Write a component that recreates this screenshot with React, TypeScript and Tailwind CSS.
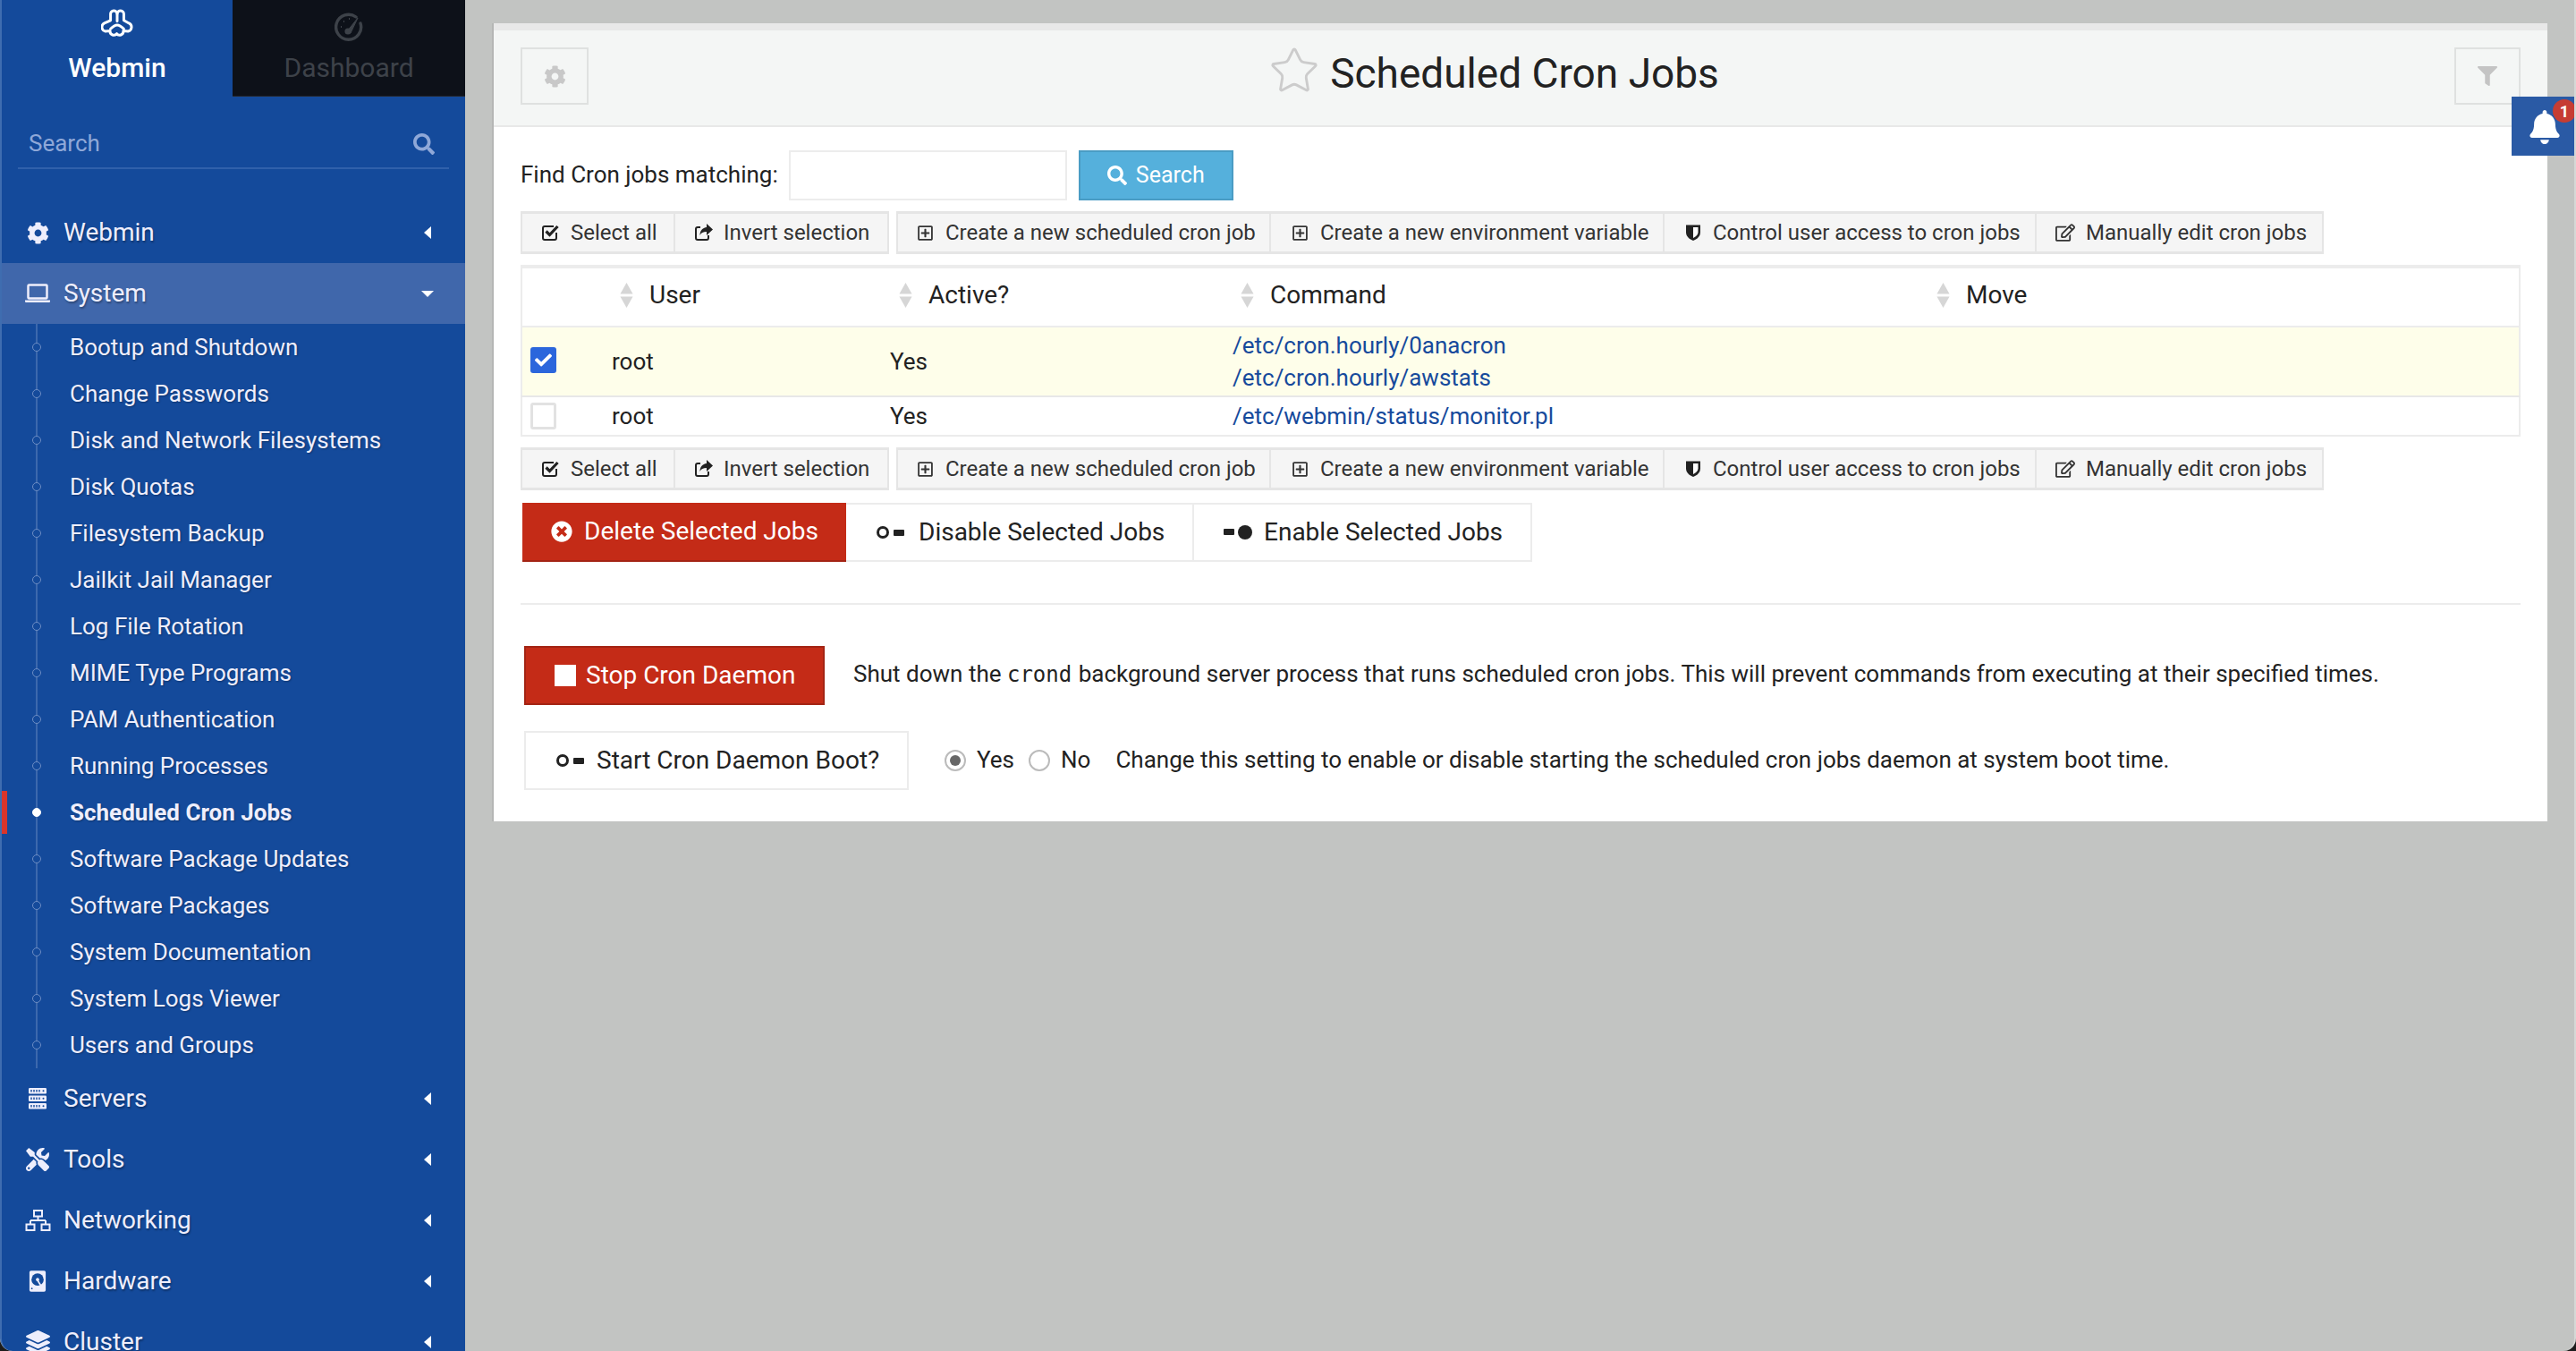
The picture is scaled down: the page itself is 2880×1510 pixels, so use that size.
import React from "react";
import {
  FaCog,
  FaTools,
  FaLayerGroup,
  FaSearch,
  FaFilter,
  FaBell,
  FaRegPlusSquare,
  FaRegEdit,
  FaTimesCircle,
  FaCheck,
} from "react-icons/fa";
import { LuStar } from "react-icons/lu";

const subItems = [
  "Bootup and Shutdown",
  "Change Passwords",
  "Disk and Network Filesystems",
  "Disk Quotas",
  "Filesystem Backup",
  "Jailkit Jail Manager",
  "Log File Rotation",
  "MIME Type Programs",
  "PAM Authentication",
  "Running Processes",
  "Scheduled Cron Jobs",
  "Software Package Updates",
  "Software Packages",
  "System Documentation",
  "System Logs Viewer",
  "Users and Groups",
];

const WebminLogo = () => (
  <svg width="36" height="33" viewBox="0 0 34 31" fill="none" stroke="white" strokeWidth="2.800" strokeLinejoin="round" strokeLinecap="round">
    <path d="M10 12V5.500a3.500 3.500 0 0 1 7-.5a3.500 3.500 0 0 1 7 .5V12l5.500 3a4.500 4.500 0 0 1-1 8.500l-5-.5c.5 4.500-5 6-7 3c-2 3-7.500 1.500-7-3l-5 .5a4.500 4.500 0 0 1-1-8.500z" />
    <path d="M17 5v8M10 21c3-3 5-4 7-4s4 1 7 4" />
  </svg>
);

const Gauge = () => (
  <svg width="32" height="32" viewBox="0 0 32 32" fill="none" stroke="#3d4249">
    <path d="M24 5A14 14 0 1 0 29 12" strokeWidth="3.400" strokeLinecap="round" />
    <path d="M14 21L26 6l-8 17z" fill="#3d4249" strokeWidth="1" />
    <circle cx="15" cy="21" r="3.600" fill="#3d4249" strokeWidth="0" />
    <path d="M7 16h1M10 10h1M16 7h1" strokeWidth="2" />
  </svg>
);

const LaptopIcon = () => (
  <svg width="28" height="22" viewBox="0 0 28 22">
    <rect x="3.500" y="1.500" width="21" height="15" rx="1" fill="none" stroke="#eeeefc" strokeWidth="2.500" />
    <path d="M0 18.500h28v1.500a1 1 0 0 1-1 1H1a1 1 0 0 1-1-1z" fill="#eeeefc" />
  </svg>
);

const ServerIcon = () => (
  <svg width="20" height="24" viewBox="0 0 20 24" fill="#eeeefc">
    {[0, 8.5, 17].map((y) => (
      <g key={y}>
        <rect x="0" y={y} width="20" height="6.500" rx="1.200" />
        <path d={`M3 ${y + 2}v2.500M6 ${y + 2}v2.500M9 ${y + 2}v2.500M12 ${y + 2}v2.500`} stroke="#144a9b" strokeWidth="1.400" />
        <circle cx="16.500" cy={y + 3.2} r="1" fill="#144a9b" />
      </g>
    ))}
  </svg>
);

const SitemapIcon = () => (
  <svg width="29" height="24" viewBox="0 0 29 24" fill="none" stroke="#eeeefc">
    <rect x="10" y="1" width="9" height="6.500" strokeWidth="2" />
    <rect x="1.500" y="16.500" width="9" height="6.500" strokeWidth="2" />
    <rect x="18.500" y="16.500" width="9" height="6.500" strokeWidth="2" />
    <path d="M14.500 7.500v4.500M6 12h17M6 12v4M23 12v4" strokeWidth="2" />
  </svg>
);

const DiskIcon = () => (
  <svg width="20" height="26" viewBox="0 0 22 26">
    <rect x="1" y="0" width="20" height="26" rx="2" fill="#eeeefc" />
    <circle cx="11" cy="11" r="7.500" fill="#144a9b" />
    <circle cx="11" cy="11" r="2" fill="#eeeefc" />
    <path d="M11 12l5 8" stroke="#eeeefc" strokeWidth="2" />
    <circle cx="4" cy="22" r="1" fill="#144a9b" />
  </svg>
);

const SortIcon = () => (
  <svg width="15" height="28" viewBox="0 0 15 28" className="shrink-0" fill="#d6d6d6">
    <path d="M7.500 0l7 12.500H.5z" />
    <path d="M7.500 28l7-12.500H.5z" />
  </svg>
);

const ToggleOff = () => (
  <svg width="32" height="14" viewBox="0 0 32 14" className="shrink-0">
    <circle cx="8" cy="7" r="5.500" fill="none" stroke="#222" strokeWidth="3" />
    <rect x="20" y="4" width="12" height="7" rx="1" fill="#222" />
  </svg>
);

const ToggleOn = () => (
  <svg width="32" height="16" viewBox="0 0 32 16" className="shrink-0">
    <circle cx="24" cy="8" r="8" fill="#222" />
    <rect x="0" y="4" width="12" height="7" rx="1" fill="#222" />
  </svg>
);

const ShieldIcon = () => (
  <svg width="18" height="20" viewBox="0 0 18 20" className="shrink-0">
    <path d="M1 1.500h16v8c0 5-4 8-8 9.500c-4-1.500-8-4.500-8-9.500z" fill="#222" />
    <path d="M9 4h5.500v5.500c0 3-2.500 5-5.500 6.500z" fill="#fff" />
  </svg>
);

const CheckSquareIcon = () => (
  <svg width="22" height="20" viewBox="0 0 22 20" className="shrink-0" fill="none" stroke="#222">
    <path d="M17 10v6a2 2 0 0 1-2 2H4a2 2 0 0 1-2-2V5a2 2 0 0 1 2-2h10" strokeWidth="2" />
    <path d="M5.500 8.500l4 4l9-9.500" strokeWidth="3.200" />
  </svg>
);

const ShareSquareIcon = () => (
  <svg width="22" height="20" viewBox="0 0 22 20" className="shrink-0">
    <path d="M16 13v3a2 2 0 0 1-2 2H4a2 2 0 0 1-2-2V6a2 2 0 0 1 2-2h3" fill="none" stroke="#222" strokeWidth="2" />
    <path d="M14 0l7 6.500l-7 6.500V9c-4 0-6 1-7.500 4c0-5 3-8.500 7.500-9z" fill="#222" />
  </svg>
);

const MainRow = ({ icon, label, open }: { icon: React.ReactNode; label: string; open?: boolean }) => (
  <div className={`flex items-center h-[68px] pl-[25px] pr-[38px] ${open ? "bg-[#4067ab]" : ""}`}>
    <div className="w-[30px] flex justify-center text-[#eeeefc]">{icon}</div>
    <span className="ml-[14px] flex-1 text-[28px] text-[#eeeefc] [text-shadow:1px_2px_2px_rgba(0,0,0,0.3)]">{label}</span>
    {open ? (
      <div className="w-0 h-0 border-x-[7px] border-x-transparent border-t-[7px] border-t-white mr-[-3px]" />
    ) : (
      <div className="w-0 h-0 border-y-[7px] border-y-transparent border-r-[8px] border-r-white" />
    )}
  </div>
);

const Sidebar = () => (
  <div className="w-[520px] h-full shrink-0 bg-[#144a9b] border-l-2 border-[#3f6db0] rounded-bl-[14px] overflow-hidden">
    <div className="flex h-[108px]">
      <div className="w-[258px] flex flex-col items-center pt-[10px]">
        <WebminLogo />
        <span className="mt-[15px] text-[30px] leading-[36px] font-medium text-white">Webmin</span>
      </div>
      <div className="w-[260px] flex flex-col items-center pt-[14px] bg-[#0d1119] border-b border-[#25272c]">
        <Gauge />
        <span className="mt-[12px] text-[30px] leading-[36px] text-[#3d4249]">Dashboard</span>
      </div>
    </div>
    <div className="mx-[18px] h-[81px] flex items-center justify-between pt-[26px] pl-[12px] pr-[16px] border-b-2 border-[#3060ab]">
      <span className="text-[26px] text-[#8fa8d8]">Search</span>
      <FaSearch className="text-[#8fa8d8] text-[24px]" />
    </div>
    <div className="mt-[37px]">
      <MainRow icon={<FaCog size={25} />} label="Webmin" />
      <MainRow icon={<LaptopIcon />} label="System" open />
      <div className="relative ml-[38px] border-l-2 border-[#3d69ad]">
        {subItems.map((item) => (
          <div key={item} className="h-[52px] flex items-center pl-[36px]">
            <div
              className={`absolute left-[-6px] w-[10px] h-[10px] rounded-full border ${
                item === "Scheduled Cron Jobs" ? "bg-white border-white" : "bg-[#144a9b] border-[#6d8dc4]"
              }`}
            />
            {item === "Scheduled Cron Jobs" && <div className="absolute left-[-40px] w-[6px] h-[48px] bg-[#d9352b]" />}
            <span
              className={`text-[26px] text-[#eeeefc] [text-shadow:1px_1px_2px_rgba(0,0,0,0.3)] ${
                item === "Scheduled Cron Jobs" ? "font-bold" : ""
              }`}
            >
              {item}
            </span>
          </div>
        ))}
      </div>
      <MainRow icon={<ServerIcon />} label="Servers" />
      <MainRow icon={<FaTools size={26} />} label="Tools" />
      <MainRow icon={<SitemapIcon />} label="Networking" />
      <MainRow icon={<DiskIcon />} label="Hardware" />
      <MainRow icon={<FaLayerGroup size={27} />} label="Cluster" />
    </div>
  </div>
);

const toolBtn =
  "flex items-center h-[48px] bg-[#f5f5f5] border-r-2 border-[#e5e5e5] border-t-[3px] border-b-[3px] text-[24px] text-[#333]";

const Toolbar = () => (
  <div className="flex">
    <div className="flex border-l-2 border-[#e5e5e5]">
      <div className={`${toolBtn} w-[171px] pl-[21px]`}>
        <CheckSquareIcon />
        <span className="ml-[11px]">Select all</span>
      </div>
      <div className={`${toolBtn} w-[239px] pl-[21px]`}>
        <ShareSquareIcon />
        <span className="ml-[11px]">Invert selection</span>
      </div>
    </div>
    <div className="flex ml-[8px] border-l-2 border-[#e5e5e5]">
      <div className={`${toolBtn} w-[417px] pl-[21px]`}>
        <FaRegPlusSquare size={19} />
        <span className="ml-[13px]">Create a new scheduled cron job</span>
      </div>
      <div className={`${toolBtn} w-[440px] pl-[23px]`}>
        <FaRegPlusSquare size={19} />
        <span className="ml-[13px]">Create a new environment variable</span>
      </div>
      <div className={`${toolBtn} w-[416px] pl-[23px]`}>
        <ShieldIcon />
        <span className="ml-[13px]">Control user access to cron jobs</span>
      </div>
      <div className={`${toolBtn} w-[321px] pl-[21px]`}>
        <FaRegEdit size={22} />
        <span className="ml-[12px]">Manually edit cron jobs</span>
      </div>
    </div>
  </div>
);

const CronTable = () => (
  <table className="w-[2236px] table-fixed border-collapse border-x-2 border-[#ececec] text-[26px] text-[#222] mt-[12px]">
    <colgroup>
      <col className="w-[82px]" />
      <col className="w-[312px]" />
      <col className="w-[382px]" />
      <col className="w-[778px]" />
      <col />
    </colgroup>
    <thead>
      <tr className="h-[67px] border-t-4 border-b-2 border-[#ececec]">
        <th />
        {["User", "Active?", "Command", "Move"].map((h) => (
          <th key={h} className="pl-[28px] pb-[5px] font-normal text-left text-[28px]">
            <span className="flex items-center gap-[18px]">
              <SortIcon />
              {h}
            </span>
          </th>
        ))}
      </tr>
    </thead>
    <tbody>
      <tr className="h-[78px] bg-[#fefeea] border-b-2 border-[#e8e8e8]">
        <td className="pl-[9px]">
          <div className="w-[29px] h-[29px] rounded-[3px] bg-[#2b66dc] flex items-center justify-center mb-[4px]">
            <FaCheck size={19} className="text-white" />
          </div>
        </td>
        <td className="pl-[19px]">root</td>
        <td className="pl-[18px]">Yes</td>
        <td className="pl-[19px] leading-[36px] text-[#164a9c]">
          <div>/etc/cron.hourly/0anacron</div>
          <div>/etc/cron.hourly/awstats</div>
        </td>
        <td />
      </tr>
      <tr className="h-[44px] border-b-2 border-[#ececec]">
        <td className="pl-[9px]">
          <div className="w-[29px] h-[30px] rounded-[3px] border-[3px] border-[#e2e2e2] bg-white" />
        </td>
        <td className="pl-[19px]">root</td>
        <td className="pl-[18px]">Yes</td>
        <td className="pl-[19px] text-[#164a9c]">/etc/webmin/status/monitor.pl</td>
        <td />
      </tr>
    </tbody>
  </table>
);

const BulkButtons = () => (
  <div className="flex mt-[14px] ml-[2px] text-[28px] text-[#222]">
    <button className="flex items-center w-[362px] h-[66px] pl-[32px] bg-[#c42b17] border-b-2 border-[#a32414] text-white">
      <FaTimesCircle size={24} />
      <span className="ml-[13px]">Delete Selected Jobs</span>
    </button>
    <button className="flex items-center w-[387px] h-[66px] pl-[33px] border-y-2 border-[#ececec]">
      <ToggleOff />
      <span className="ml-[16px]">Disable Selected Jobs</span>
    </button>
    <button className="flex items-center w-[380px] h-[66px] pl-[33px] border-2 border-[#ececec]">
      <ToggleOn />
      <span className="ml-[13px]">Enable Selected Jobs</span>
    </button>
  </div>
);

const Panel = () => (
  <div className="w-[2298px] mt-[26px] ml-[30px] bg-white border-l-2 border-[#b5b6b5]">
    <div className="h-[116px] bg-[#f4f6f5] border-t-[8px] border-b-2 border-t-[#e8e8e8] border-b-[#e8e8e8] flex justify-between items-start pt-[19px] px-[30px]">
      <div className="w-[76px] h-[64px] flex items-center justify-center border-2 border-[#dfe1e0]">
        <FaCog size={25} className="text-[#c8c8c8]" />
      </div>
      <div className="flex items-center mr-[62px] mt-[-3px]">
        <LuStar size={58} strokeWidth={1.2} className="text-[#cccccc] mt-[-6px]" />
        <span className="ml-[11px] text-[46px] leading-[64px] text-[#222]">Scheduled Cron Jobs</span>
      </div>
      <div className="w-[74px] h-[64px] flex items-center justify-center border-2 border-[#dfe1e0]">
        <FaFilter size={22} className="text-[#c4c4c4]" />
      </div>
    </div>
    <div className="px-[30px] pb-[35px]">
      <div className="flex items-center mt-[26px] h-[56px] text-[26px] text-[#222]">
        <span className="mr-[12px] mb-[2px]">Find Cron jobs matching:</span>
        <div className="w-[311px] h-full border-2 border-[#ececec]" />
        <button className="flex items-center justify-center gap-[10px] ml-[13px] w-[173px] h-full bg-[#55b0dc] border-2 border-[#4a9cc4] text-white text-[25px]">
          <FaSearch size={22} />
          Search
        </button>
      </div>
      <div className="mt-[12px]">
        <Toolbar />
      </div>
      <CronTable />
      <div className="mt-[12px]">
        <Toolbar />
      </div>
      <BulkButtons />
      <div className="mt-[46px] h-[2px] bg-[#ececec]" />
      <div className="flex items-center mt-[46px] ml-[4px] text-[26px] text-[#222]">
        <button className="flex items-center w-[336px] h-[66px] pl-[32px] bg-[#c42b17] border-2 border-[#a32414] text-white text-[28px]">
          <div className="w-[24px] h-[24px] bg-white" />
          <span className="ml-[11px]">Stop Cron Daemon</span>
        </button>
        <span className="ml-[32px] mb-[3px]">
          Shut down the <span className="font-['DejaVu_Sans_Mono',monospace] text-[24px] mr-[1px]">crond</span> background server process that runs scheduled cron jobs. This will prevent commands from executing at their specified times.
        </span>
      </div>
      <div className="flex items-center mt-[29px] ml-[4px] text-[26px] text-[#222]">
        <button className="flex items-center w-[430px] h-[66px] pl-[33px] border-2 border-[#ececec] text-[28px]">
          <ToggleOff />
          <span className="ml-[14px]">Start Cron Daemon Boot?</span>
        </button>
        <div className="ml-[40px] w-[24px] h-[24px] rounded-full border-2 border-[#bbb] flex items-center justify-center">
          <div className="w-[12px] h-[12px] rounded-full bg-[#666]" />
        </div>
        <span className="ml-[12px] mb-[2px]">Yes</span>
        <div className="ml-[16px] w-[24px] h-[24px] rounded-full border-2 border-[#bbb]" />
        <span className="ml-[12px] mb-[2px]">No</span>
        <span className="ml-[28px] mb-[2px]">Change this setting to enable or disable starting the scheduled cron jobs daemon at system boot time.</span>
      </div>
    </div>
  </div>
);

export default function App() {
  return (
    <div className="h-[1510px] bg-[#1c1c1c] overflow-hidden font-['Roboto',sans-serif]">
      <div className="relative flex items-start h-full bg-[#c2c4c2] border-r-2 border-[#d6d8d6] rounded-b-[14px] overflow-hidden">
        <Sidebar />
        <Panel />
        <div className="absolute top-[108px] right-[-2px] w-[72px] h-[66px] bg-[#2a5aa5] flex items-center justify-center">
          <div className="relative mt-[2px] ml-[2px]">
            <FaBell size={38} className="text-white" />
            <div className="absolute top-[-12px] right-[-16px] w-[26px] h-[26px] rounded-full bg-[#c63d33] text-white text-[18px] font-bold flex items-center justify-center">
              1
            </div>
          </div>
        </div>
      </div>
    </div>
  );
}
